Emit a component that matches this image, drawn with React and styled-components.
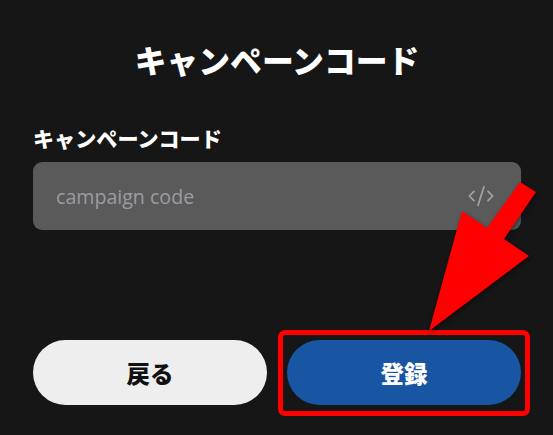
import React from "react";
import styled, { createGlobalStyle } from "styled-components";
import { CodeXml } from "lucide-react";

const GlobalStyle = createGlobalStyle`
  html, body {
    margin: 0;
    padding: 0;
    background: #161616;
  }
  * {
    box-sizing: border-box;
  }
`;

const Page = styled.div`
  position: relative;
  width: 553px;
  height: 435px;
  overflow: hidden;
  padding: 0 32px 0 33px;
  display: flex;
  flex-direction: column;
  background: #161616;
  color: #fff;
  font-family: "Noto Sans CJK JP", "Noto Sans", sans-serif;
`;

const Title = styled.h1`
  margin: 37px 0 0;
  height: 44px;
  font-size: 31.8px;
  line-height: 44px;
  font-weight: 900;
  text-align: center;
`;

const Label = styled.label`
  display: block;
  margin-top: 43px;
  height: 28px;
  font-size: 21.1px;
  line-height: 28px;
  font-weight: 900;
`;

const Field = styled.div`
  margin-top: 10px;
  height: 68px;
  padding: 0 26px 0 23px;
  display: flex;
  align-items: center;
  justify-content: space-between;
  background: #5a5a5a;
  border-radius: 9px;
`;

const Placeholder = styled.span`
  font-family: "Open Sans", "Noto Sans", sans-serif;
  font-size: 19.6px;
  color: #9b9ca3;
`;

const Actions = styled.div`
  margin-top: 110px;
  display: grid;
  grid-template-columns: 1fr 1fr;
  gap: 20px;
`;

const Button = styled.button`
  height: 65px;
  border: none;
  border-radius: 33px;
  padding: 0;
  font-family: inherit;
  font-size: 23.5px;
  font-weight: 900;
  background: ${(p) => (p.$primary ? "#1855a3" : "#eeeeee")};
  color: ${(p) => (p.$primary ? "#ffffff" : "#111111")};
`;

const Highlight = styled.div`
  position: absolute;
  left: 278px;
  top: 330px;
  width: 252px;
  height: 86px;
  border: 5px solid #ff0000;
  border-radius: 7px;
`;

const Arrow = styled.svg`
  position: absolute;
  left: 0;
  top: 0;
  filter: drop-shadow(1px 2px 2px rgba(0, 0, 0, 0.45));
`;

export default function App() {
  return (
    <Page>
      <GlobalStyle />
      <Title>キャンペーンコード</Title>
      <Label>キャンペーンコード</Label>
      <Field>
        <Placeholder>campaign code</Placeholder>
        <CodeXml size={28} strokeWidth={1.5} color="#a3a3a3" />
      </Field>
      <Actions>
        <Button>戻る</Button>
        <Button $primary>登録</Button>
      </Actions>
      <Highlight />
      <Arrow width="553" height="435" viewBox="0 0 553 435">
        <polygon
          points="520,182 536,192 504,239 529,256 429,331 462,211 487,228"
          fill="#ff0000"
        />
      </Arrow>
    </Page>
  );
}
